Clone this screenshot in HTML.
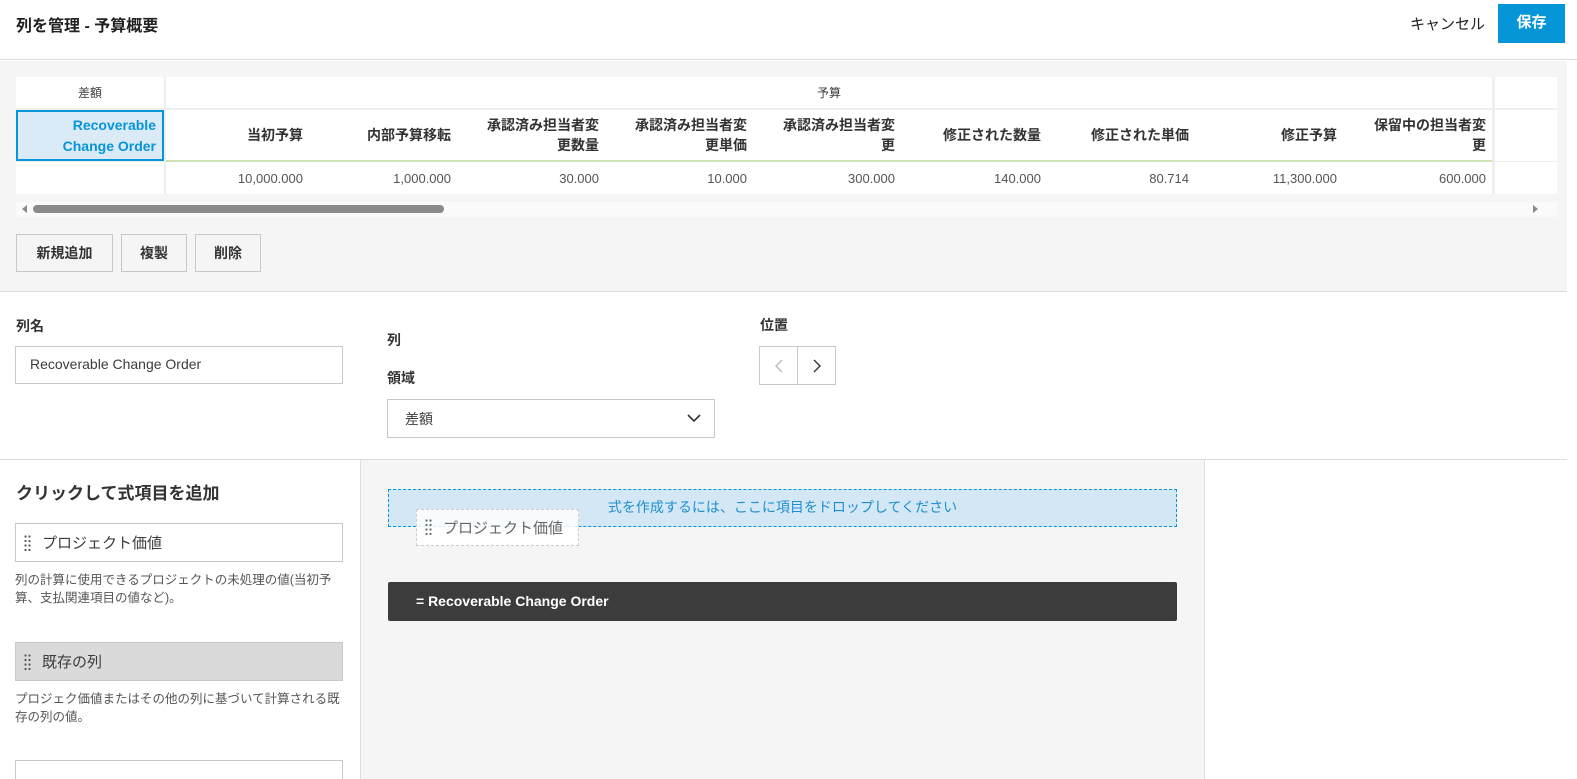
<!DOCTYPE html>
<html><head><meta charset="utf-8"><style>
*{box-sizing:border-box;margin:0;padding:0}
html{overflow:hidden;width:1577px;height:779px}
body{width:1577px;height:779px;overflow:hidden;background:#fff;font-family:"Liberation Sans","Noto Sans CJK JP",sans-serif;color:#3c3c3c;position:relative}
.abs{position:absolute}
.hdr{height:60px;border-bottom:1px solid #ddd;width:1577px}
.title{left:16px;top:12px;font-size:16px;font-weight:bold;color:#222}
.cancel{left:1410px;top:13px;font-size:15px;color:#222}
.save{left:1498px;top:4px;width:67px;height:39px;background:#0696d7;color:#fff;font-weight:bold;font-size:15px;text-align:center;line-height:38px}
.gray1{left:0;top:61px;width:1567px;height:230px;background:#f5f5f5}
.tbl{left:16px;top:77px;width:1541px;height:117px;background:#fff}
.cell{position:absolute;font-size:14px;text-align:right}
.th{font-weight:bold;color:#333;line-height:20px}
.num{font-size:13px;color:#555}
.btn{position:absolute;top:234px;height:38px;border:1px solid #c8c8c8;background:#f5f5f5;font-size:14px;font-weight:bold;line-height:36px;text-align:center;color:#333}
.lbl{font-size:14px;font-weight:bold;color:#333}
.inp{border:1px solid #c8c8c8;background:#fff;font-size:14px}
</style></head><body>
<div class="abs hdr"></div>
<div class="abs title">列を管理 - 予算概要</div>
<div class="abs cancel">キャンセル</div>
<div class="abs save">保存</div>

<div class="abs gray1"></div>
<div class="abs tbl">
  <div class="abs" style="left:148px;top:0;width:2px;height:117px;background:#eee"></div>
  <div class="abs" style="left:1476px;top:0;width:3px;height:117px;background:#eee"></div>
  <div class="abs" style="left:0;top:31px;width:1541px;height:2px;background:#eee"></div>
  <div class="abs" style="left:150px;top:83px;width:1326px;height:2px;background:#cfe3b8"></div>
  <div class="abs" style="left:0;top:84px;width:148px;height:1px;background:#eee"></div>
  <div class="abs" style="left:1479px;top:84px;width:62px;height:1px;background:#eee"></div>
  <div class="cell" style="left:0;top:7px;width:148px;text-align:center;font-size:12px">差額</div>
  <div class="cell" style="left:150px;top:7px;width:1326px;text-align:center;font-size:12px">予算</div>
  <div class="abs" style="left:0;top:33px;width:148px;height:51px;background:#daeaf7;border:2px solid #0696d7;color:#0696d7;font-size:14px;font-weight:bold;text-align:right;padding:3px 6px 0 0;line-height:21px">Recoverable<br>Change Order</div>
</div>
<div class="abs" style="left:16px;top:77px">
  <div class="cell th" style="left:149px;top:48px;width:138px">当初予算</div>
  <div class="cell th" style="left:297px;top:48px;width:138px">内部予算移転</div>
  <div class="cell th" style="left:445px;top:38px;width:138px">承認済み担当者変<br>更数量</div>
  <div class="cell th" style="left:593px;top:38px;width:138px">承認済み担当者変<br>更単価</div>
  <div class="cell th" style="left:741px;top:38px;width:138px">承認済み担当者変<br>更</div>
  <div class="cell th" style="left:889px;top:48px;width:136px">修正された数量</div>
  <div class="cell th" style="left:1037px;top:48px;width:136px">修正された単価</div>
  <div class="cell th" style="left:1185px;top:48px;width:136px">修正予算</div>
  <div class="cell th" style="left:1333px;top:38px;width:137px">保留中の担当者変<br>更</div>
  <div class="cell num" style="left:149px;top:94px;width:138px">10,000.000</div>
  <div class="cell num" style="left:297px;top:94px;width:138px">1,000.000</div>
  <div class="cell num" style="left:445px;top:94px;width:138px">30.000</div>
  <div class="cell num" style="left:593px;top:94px;width:138px">10.000</div>
  <div class="cell num" style="left:741px;top:94px;width:138px">300.000</div>
  <div class="cell num" style="left:889px;top:94px;width:136px">140.000</div>
  <div class="cell num" style="left:1037px;top:94px;width:136px">80.714</div>
  <div class="cell num" style="left:1185px;top:94px;width:136px">11,300.000</div>
  <div class="cell num" style="left:1333px;top:94px;width:137px">600.000</div>
</div>
<div class="abs" style="left:16px;top:202px;width:1541px;height:15px;background:#fafafa"></div>
<div class="abs" style="left:22px;top:205px;width:0;height:0;border-top:4px solid transparent;border-bottom:4px solid transparent;border-right:5px solid #888"></div>
<div class="abs" style="left:1533px;top:205px;width:0;height:0;border-top:4px solid transparent;border-bottom:4px solid transparent;border-left:5px solid #888"></div>
<div class="abs" style="left:33px;top:205px;width:411px;height:8px;border-radius:4px;background:#8a8a8a"></div>
<div class="btn" style="left:16px;width:97px">新規追加</div>
<div class="btn" style="left:121px;width:66px">複製</div>
<div class="btn" style="left:195px;width:66px">削除</div>
<div class="abs" style="left:0;top:291px;width:1567px;height:1px;background:#ddd"></div>

<div class="abs lbl" style="left:16px;top:316px">列名</div>
<div class="abs inp" style="left:15px;top:346px;width:328px;height:38px;padding:9px 14px">Recoverable Change Order</div>
<div class="abs lbl" style="left:387px;top:330px">列</div>
<div class="abs lbl" style="left:387px;top:368px">領域</div>
<div class="abs inp" style="left:387px;top:399px;width:328px;height:39px;padding:9px 17px">差額</div>
<svg class="abs" style="left:686px;top:412px" width="16" height="12"><path d="M2 3 L8 9 L14 3" fill="none" stroke="#333" stroke-width="1.6"/></svg>
<div class="abs lbl" style="left:760px;top:315px">位置</div>
<div class="abs inp" style="left:759px;top:346px;width:77px;height:39px"></div>
<div class="abs" style="left:797px;top:346px;width:1px;height:39px;background:#c8c8c8"></div>
<svg class="abs" style="left:772px;top:358px" width="14" height="16"><path d="M10 2 L4 8 L10 14" fill="none" stroke="#bbb" stroke-width="1.4"/></svg>
<svg class="abs" style="left:810px;top:358px" width="14" height="16"><path d="M4 2 L10 8 L4 14" fill="none" stroke="#333" stroke-width="1.4"/></svg>
<div class="abs" style="left:0;top:459px;width:1567px;height:1px;background:#ddd"></div>

<div class="abs" style="left:360px;top:460px;width:845px;height:319px;background:#f5f5f5;border-left:1px solid #ddd;border-right:1px solid #ddd"></div>
<div class="abs" style="left:16px;top:479px;font-size:17px;font-weight:bold;color:#333">クリックして式項目を追加</div>
<div class="abs inp" style="left:15px;top:523px;width:328px;height:39px;padding:8px 26px;font-size:15px">プロジェクト価値</div>
<svg class="abs" style="left:24px;top:535px" width="8" height="16" fill="#555"><circle cx="1.5" cy="1.5" r="1.1"/><circle cx="5.5" cy="1.5" r="1.1"/><circle cx="1.5" cy="6" r="1.1"/><circle cx="5.5" cy="6" r="1.1"/><circle cx="1.5" cy="10.5" r="1.1"/><circle cx="5.5" cy="10.5" r="1.1"/><circle cx="1.5" cy="15" r="1.1"/><circle cx="5.5" cy="15" r="1.1"/></svg>
<div class="abs" style="left:15px;top:571px;width:332px;font-size:12.5px;line-height:18px;color:#555">列の計算に使用できるプロジェクトの未処理の値(当初予算、支払関連項目の値など)。</div>
<div class="abs inp" style="left:15px;top:642px;width:328px;height:39px;padding:8px 26px;font-size:15px;background:#dadada">既存の列</div>
<svg class="abs" style="left:24px;top:654px" width="8" height="16" fill="#555"><circle cx="1.5" cy="1.5" r="1.1"/><circle cx="5.5" cy="1.5" r="1.1"/><circle cx="1.5" cy="6" r="1.1"/><circle cx="5.5" cy="6" r="1.1"/><circle cx="1.5" cy="10.5" r="1.1"/><circle cx="5.5" cy="10.5" r="1.1"/><circle cx="1.5" cy="15" r="1.1"/><circle cx="5.5" cy="15" r="1.1"/></svg>
<div class="abs" style="left:15px;top:690px;width:335px;font-size:12.5px;line-height:18px;color:#555">プロジェク価値またはその他の列に基づいて計算される既存の列の値。</div>
<div class="abs inp" style="left:15px;top:760px;width:328px;height:30px"></div>

<div class="abs" style="left:388px;top:489px;width:789px;height:38px;background:#d4e7f4;border:1px dashed #0696d7;color:#1f8fd0;font-size:14px;text-align:center;line-height:34px">式を作成するには、ここに項目をドロップしてください</div>
<div class="abs" style="left:416px;top:509px;width:163px;height:37px;background:rgba(255,255,255,.85);border:1px dashed #ccc;color:#666;font-size:15px;padding:7px 0 0 26px">プロジェクト価値</div>
<svg class="abs" style="left:425px;top:519px" width="8" height="16" fill="#666"><circle cx="1.5" cy="1.5" r="1.1"/><circle cx="5.5" cy="1.5" r="1.1"/><circle cx="1.5" cy="6" r="1.1"/><circle cx="5.5" cy="6" r="1.1"/><circle cx="1.5" cy="10.5" r="1.1"/><circle cx="5.5" cy="10.5" r="1.1"/><circle cx="1.5" cy="15" r="1.1"/><circle cx="5.5" cy="15" r="1.1"/></svg>
<div class="abs" style="left:388px;top:582px;width:789px;height:39px;background:#3c3c3c;border-radius:2px;color:#fff;font-size:14px;font-weight:bold;line-height:39px;padding-left:28px">= Recoverable Change Order</div>
</body></html>
